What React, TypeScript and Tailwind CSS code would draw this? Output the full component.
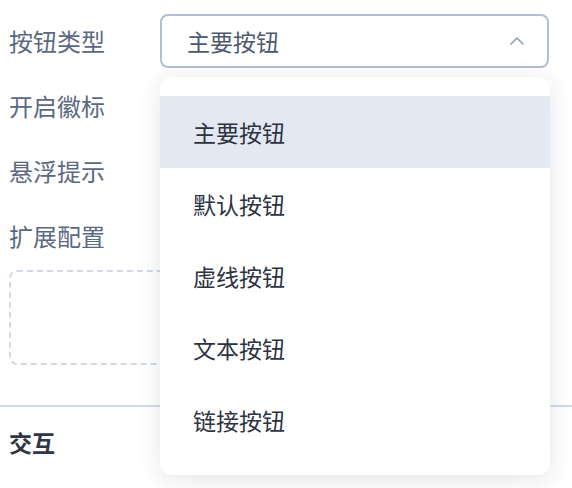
import { ChevronUp } from "lucide-react";

const labels = ["开启徽标", "悬浮提示", "扩展配置"];

const options = ["主要按钮", "默认按钮", "虚线按钮", "文本按钮", "链接按钮"];

const font = { fontFamily: '"Noto Sans CJK SC", "Noto Sans", sans-serif' };

function App() {
  return (
    <div className="relative w-[572px] h-[488px] overflow-hidden bg-white" style={font}>
      <div className="pl-[9px] pt-[14px]">
        <div className="flex items-center h-[54px]">
          <span className="w-[151px] text-[24px] leading-none text-[#5b6982]">按钮类型</span>
          <div className="flex items-center justify-between w-[389px] h-[54px] rounded-lg border-2 border-[#b3bfd4] pl-[25px] pr-[18px]">
            <span className="text-[23px] leading-none text-[#4d5870]">主要按钮</span>
            <ChevronUp className="w-[24px] h-[24px] text-[#8d9ab2]" strokeWidth={1.5} />
          </div>
        </div>
        <div className="flex flex-col">
          {labels.map((l) => (
            <div key={l} className="h-[65px] flex items-center text-[24px] leading-none text-[#5b6982] first:mt-[5px]">
              {l}
            </div>
          ))}
        </div>
        <div className="mt-[2px] w-[360px] h-[95px] rounded-lg border-2 border-dashed border-[#d3d9e8]" />
      </div>
      <div className="mt-[40px] border-t-2 border-[#d3d8e6]" />
      <div className="pl-[9px] h-[70px] flex items-center text-[23px] leading-none font-bold text-[#2f3645]">交互</div>

      <div className="absolute left-[160px] top-[77px] w-[390px] rounded-xl bg-white py-[19px] shadow-[0_4px_24px_rgba(30,40,70,0.12)]">
        {options.map((o, i) => (
          <div
            key={o}
            className={`h-[72px] flex items-center pl-[33px] text-[23px] leading-none text-[#2e3340] ${i === 0 ? "bg-[#e3e8f2]" : ""}`}
          >
            {o}
          </div>
        ))}
      </div>
    </div>
  );
}

export default App;
